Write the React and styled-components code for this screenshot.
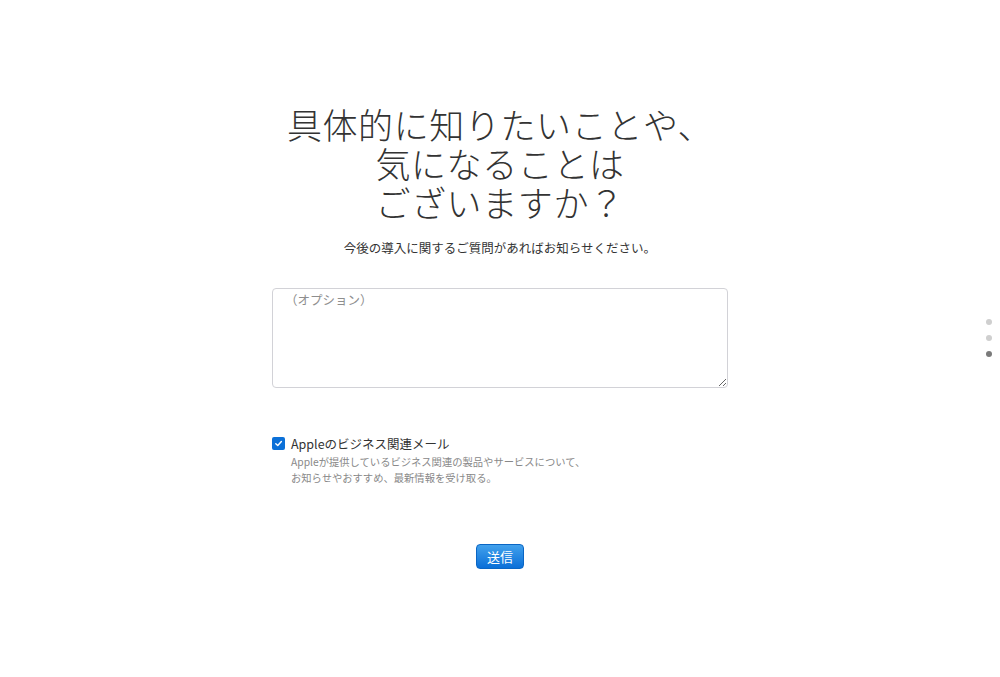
import React from 'react';
import styled, { createGlobalStyle } from 'styled-components';

const GlobalStyle = createGlobalStyle`
  html, body {
    margin: 0;
    padding: 0;
    background: #fff;
  }
  body {
    font-family: "Noto Sans CJK JP", "Noto Sans", "Liberation Sans", sans-serif;
    color: #333;
  }
`;

const Page = styled.main`
  position: relative;
  width: 1000px;
  height: 677px;
  display: flex;
  flex-direction: column;
  align-items: center;
  padding-top: 104px;
  box-sizing: border-box;
`;

const Title = styled.h1`
  margin: 0;
  font-size: 35px;
  line-height: 39px;
  font-weight: 300;
  text-align: center;
  color: #333;
  letter-spacing: 0.6px;
`;

const Lead = styled.p`
  margin: 17px 0 0;
  font-size: 12.5px;
  line-height: 20px;
  color: #333;
`;

const Form = styled.form`
  width: 456px;
  margin-top: 30px;
  display: flex;
  flex-direction: column;
`;

const TextArea = styled.textarea`
  width: 100%;
  height: 100px;
  box-sizing: border-box;
  border: 1px solid #d2d2d7;
  border-radius: 4px;
  padding: 1px 12px;
  font-family: inherit;
  font-size: 12.5px;
  line-height: 20px;
  color: #333;
  resize: vertical;
  outline: none;

  &::placeholder {
    color: #8e8e8e;
  }
`;

const OptIn = styled.label`
  margin-top: 48px;
  display: grid;
  grid-template-columns: 13px 1fr;
  column-gap: 6px;
  cursor: pointer;
`;

const Box = styled.span`
  width: 13px;
  height: 13px;
  margin-top: 1px;
  border-radius: 2px;
  background: #0b70d8;
  display: flex;
  align-items: center;
  justify-content: center;
`;

const OptTitle = styled.span`
  font-size: 12.5px;
  line-height: 16px;
  color: #333;
`;

const OptText = styled.span`
  grid-column: 2;
  margin-top: 2px;
  font-size: 10.3px;
  line-height: 16px;
  color: #888;
`;

const Actions = styled.div`
  display: flex;
  justify-content: center;
  margin-top: 58px;
`;

const Submit = styled.button`
  width: 48px;
  height: 25px;
  border: 1px solid #0a66c4;
  border-radius: 4px;
  background: linear-gradient(#42a1ec, #0a6fd8);
  color: #fff;
  font-family: inherit;
  font-size: 13px;
  line-height: 1;
  padding: 0;
  cursor: pointer;
`;

const Dots = styled.nav`
  position: absolute;
  right: 8px;
  top: 319px;
  display: flex;
  flex-direction: column;
  gap: 10px;
`;

const Dot = styled.span`
  width: 6px;
  height: 6px;
  border-radius: 50%;
  background: ${p => (p.$active ? '#7a7a7a' : '#cfcfcf')};
`;

const App = () => (
  <>
    <GlobalStyle />
    <Page>
      <Title>
        具体的に知りたいことや、
        <br />
        気になることは
        <br />
        ございますか？
      </Title>
      <Lead>今後の導入に関するご質問があればお知らせください。</Lead>
      <Form onSubmit={e => e.preventDefault()}>
        <TextArea placeholder="（オプション）" />
        <OptIn>
          <Box>
            <svg width="9" height="9" viewBox="0 0 10 10">
              <path d="M2 5.2 L4.2 7.3 L8.2 2.8" fill="none" stroke="#fff" strokeWidth="1.6" strokeLinecap="round" strokeLinejoin="round" />
            </svg>
          </Box>
          <OptTitle>Appleのビジネス関連メール</OptTitle>
          <OptText>
            Appleが提供しているビジネス関連の製品やサービスについて、
            <br />
            お知らせやおすすめ、最新情報を受け取る。
          </OptText>
        </OptIn>
        <Actions>
          <Submit type="submit">送信</Submit>
        </Actions>
      </Form>
      <Dots>
        <Dot />
        <Dot />
        <Dot $active />
      </Dots>
    </Page>
  </>
);

export default App;
